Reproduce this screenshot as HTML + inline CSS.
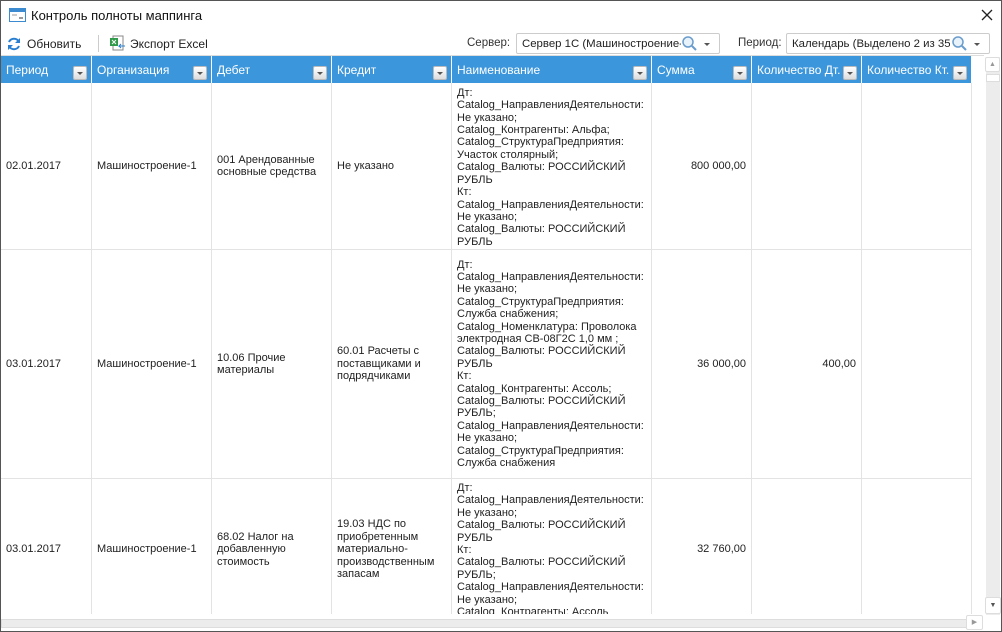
<!DOCTYPE html>
<html><head><meta charset="utf-8"><style>
*{box-sizing:border-box;margin:0;padding:0}
body{width:1002px;height:632px;overflow:hidden;background:#fff;font-family:"Liberation Sans",Arial,sans-serif;font-size:11px;color:#222;position:relative}
.win{position:absolute;left:0;top:0;width:1002px;height:632px;border:1px solid #555}
.abs{position:absolute}
.title{left:31px;top:8px;font-size:13px;color:#111}
.hdr{position:absolute;top:56px;height:27px;background:#3c96dc;color:#fff;font-size:12px;border-right:1px solid #fff;padding:7px 0 0 5px}
.dd{position:absolute;right:4px;top:10px;width:14px;height:14px;background:linear-gradient(#fff,#ddd);border:1px solid #bbb;border-radius:2px}
.dd:after{content:"";position:absolute;left:3px;top:5px;border:3px solid transparent;border-top:3px solid #555}
.cell{position:absolute;border-right:1px solid #e3e3e3;border-bottom:1px solid #e3e3e3;display:flex;align-items:center;padding:0 5px;line-height:12.4px}
.r{justify-content:flex-end}
.combo{position:absolute;top:33px;height:21px;border:1px solid #ccc;border-radius:2px;padding:4px 5px;font-size:11.4px;color:#222;white-space:nowrap;overflow:hidden}
.lbl{position:absolute;top:37px;font-size:11.5px;color:#333}
</style></head><body>
<div class="win"></div>
<svg class="abs" style="left:9px;top:8px" width="17" height="14"><rect x="0.5" y="0.5" width="16" height="13" fill="#fff" stroke="#3c8ad0"/><rect x="1" y="1" width="15" height="3" fill="#3c8ad0"/><line x1="3" y1="7" x2="8" y2="7" stroke="#999"/><rect x="10" y="9" width="4" height="2" fill="#999"/></svg>
<div class="abs title">Контроль полноты маппинга</div>
<svg class="abs" style="left:981px;top:9px" width="12" height="12"><path d="M1 1L11 11M11 1L1 11" stroke="#222" stroke-width="1.3"/></svg>
<svg class="abs" style="left:6px;top:36px" width="16" height="16" viewBox="0 0 16 16"><path d="M3 6a5.5 5.5 0 0 1 10 0M13 10a5.5 5.5 0 0 1-10 0" fill="none" stroke="#2a7fd0" stroke-width="2"/><path d="M14 2v5h-5z M2 14v-5h5z" fill="#2a7fd0"/></svg>
<div class="abs" style="left:27px;top:37px;font-size:12px">Обновить</div>
<div class="abs" style="left:98px;top:35px;width:1px;height:17px;background:#ccc"></div>
<svg class="abs" style="left:109px;top:34px" width="17" height="18"><rect x="4" y="2" width="10" height="14" fill="#fff" stroke="#888"/><rect x="1" y="4" width="8" height="8" fill="#2f9b4a"/><path d="M3 6l4 4M7 6l-4 4" stroke="#fff"/><path d="M16 12h-6l2-2M10 12l2 2" stroke="#2a7fd0" fill="none"/></svg>
<div class="abs" style="left:130px;top:37px;font-size:12px">Экспорт Excel</div>
<div class="lbl" style="left:467px">Сервер:</div>
<div class="combo" style="left:516px;width:204px">Сервер 1С (Машиностроение-1</div>
<div class="lbl" style="left:738px">Период:</div>
<div class="combo" style="left:786px;width:204px">Календарь (Выделено 2 из 357</div>
<div class="abs" style="left:681px;top:34px;width:37px;height:19px;background:#fff"></div>
<div class="abs" style="left:950px;top:34px;width:38px;height:19px;background:#fff"></div>
<svg class="abs" style="left:682px;top:36px" width="34" height="16"><circle cx="6" cy="6" r="5" fill="#e8f2fb" stroke="#6a9ccc" stroke-width="1.5"/><line x1="10" y1="10" x2="14" y2="14" stroke="#6a9ccc" stroke-width="2"/><path d="M22 7h6l-3 3z" fill="#555"/></svg>
<svg class="abs" style="left:952px;top:36px" width="34" height="16"><circle cx="6" cy="6" r="5" fill="#e8f2fb" stroke="#6a9ccc" stroke-width="1.5"/><line x1="10" y1="10" x2="14" y2="14" stroke="#6a9ccc" stroke-width="2"/><path d="M22 7h6l-3 3z" fill="#555"/></svg>
<div class="abs" style="left:1px;top:55px;width:983px;height:1px;background:#ddd"></div>

<div class="hdr" style="left:1px;width:91px">Период<span class="dd"></span></div>
<div class="hdr" style="left:92px;width:120px">Организация<span class="dd"></span></div>
<div class="hdr" style="left:212px;width:120px">Дебет<span class="dd"></span></div>
<div class="hdr" style="left:332px;width:120px">Кредит<span class="dd"></span></div>
<div class="hdr" style="left:452px;width:200px">Наименование<span class="dd"></span></div>
<div class="hdr" style="left:652px;width:100px">Сумма<span class="dd"></span></div>
<div class="hdr" style="left:752px;width:110px">Количество Дт.<span class="dd"></span></div>
<div class="hdr" style="left:862px;width:110px">Количество Кт.<span class="dd"></span></div>

<div style="position:absolute;left:1px;top:83px;width:971px;height:531px;overflow:hidden">
<div class="cell" style="left:0;top:0;width:91px;height:167px">02.01.2017</div>
<div class="cell" style="left:91px;top:0;width:120px;height:167px">Машиностроение-1</div>
<div class="cell" style="left:211px;top:0;width:120px;height:167px">001 Арендованные основные средства</div>
<div class="cell" style="left:331px;top:0;width:120px;height:167px">Не указано</div>
<div class="cell" style="left:451px;top:0;width:200px;height:167px;padding-top:3px">Дт:<br>Catalog_НаправленияДеятельности:<br>Не указано;<br>Catalog_Контрагенты: Альфа;<br>Catalog_СтруктураПредприятия:<br>Участок столярный;<br>Catalog_Валюты: РОССИЙСКИЙ<br>РУБЛЬ<br>Кт:<br>Catalog_НаправленияДеятельности:<br>Не указано;<br>Catalog_Валюты: РОССИЙСКИЙ<br>РУБЛЬ</div>
<div class="cell r" style="left:651px;top:0;width:100px;height:167px">800 000,00</div>
<div class="cell r" style="left:751px;top:0;width:110px;height:167px"></div>
<div class="cell r" style="left:861px;top:0;width:110px;height:167px"></div>
<div class="cell" style="left:0;top:167px;width:91px;height:229px">03.01.2017</div>
<div class="cell" style="left:91px;top:167px;width:120px;height:229px">Машиностроение-1</div>
<div class="cell" style="left:211px;top:167px;width:120px;height:229px">10.06 Прочие материалы</div>
<div class="cell" style="left:331px;top:167px;width:120px;height:229px">60.01 Расчеты с поставщиками и подрядчиками</div>
<div class="cell" style="left:451px;top:167px;width:200px;height:229px">Дт:<br>Catalog_НаправленияДеятельности:<br>Не указано;<br>Catalog_СтруктураПредприятия:<br>Служба снабжения;<br>Catalog_Номенклатура: Проволока<br>электродная СВ-08Г2С 1,0 мм ;<br>Catalog_Валюты: РОССИЙСКИЙ<br>РУБЛЬ<br>Кт:<br>Catalog_Контрагенты: Ассоль;<br>Catalog_Валюты: РОССИЙСКИЙ<br>РУБЛЬ;<br>Catalog_НаправленияДеятельности:<br>Не указано;<br>Catalog_СтруктураПредприятия:<br>Служба снабжения</div>
<div class="cell r" style="left:651px;top:167px;width:100px;height:229px">36 000,00</div>
<div class="cell r" style="left:751px;top:167px;width:110px;height:229px">400,00</div>
<div class="cell r" style="left:861px;top:167px;width:110px;height:229px"></div>
<div class="cell" style="left:0;top:396px;width:91px;height:142px">03.01.2017</div>
<div class="cell" style="left:91px;top:396px;width:120px;height:142px">Машиностроение-1</div>
<div class="cell" style="left:211px;top:396px;width:120px;height:142px">68.02 Налог на добавленную стоимость</div>
<div class="cell" style="left:331px;top:396px;width:120px;height:142px">19.03 НДС по приобретенным материально-производственным запасам</div>
<div class="cell" style="left:451px;top:396px;width:200px;height:142px;align-items:flex-start;padding-top:3px">Дт:<br>Catalog_НаправленияДеятельности:<br>Не указано;<br>Catalog_Валюты: РОССИЙСКИЙ<br>РУБЛЬ<br>Кт:<br>Catalog_Валюты: РОССИЙСКИЙ<br>РУБЛЬ;<br>Catalog_НаправленияДеятельности:<br>Не указано;<br>Catalog_Контрагенты: Ассоль</div>
<div class="cell r" style="left:651px;top:396px;width:100px;height:142px">32 760,00</div>
<div class="cell r" style="left:751px;top:396px;width:110px;height:142px"></div>
<div class="cell r" style="left:861px;top:396px;width:110px;height:142px"></div>
</div>

<div class="abs" style="left:986px;top:57px;width:14px;height:558px;background:#ececec"></div>
<div class="abs" style="left:985px;top:57px;width:15px;height:15px;background:#fff;border:1px solid #ddd;border-radius:2px;font-size:7px;color:#999;text-align:center;line-height:13px">▲</div>
<div class="abs" style="left:986px;top:74px;width:14px;height:8px;background:#fff;border:1px solid #ddd"></div>
<div class="abs" style="left:985px;top:597px;width:16px;height:17px;background:#fff;border:1px solid #ddd;border-radius:2px;font-size:7px;color:#555;text-align:center;line-height:15px">▼</div>
<div class="abs" style="left:1px;top:619px;width:968px;height:9px;background:#ececec;border:1px solid #ddd"></div>
<div class="abs" style="left:966px;top:615px;width:17px;height:15px;background:#fff;border:1px solid #ddd;border-radius:2px;font-size:7px;color:#999;text-align:center;line-height:13px">▶</div>
</body></html>
